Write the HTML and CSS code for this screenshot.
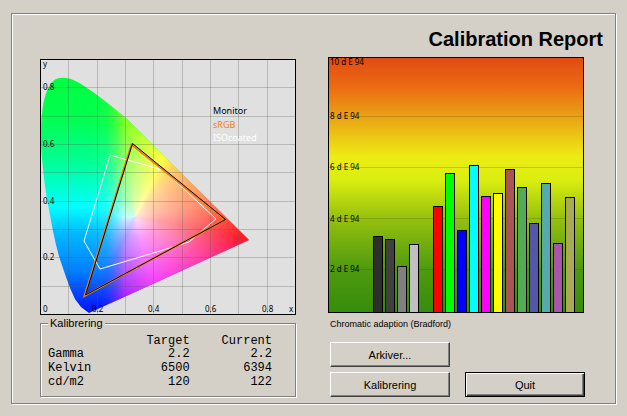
FILE: index.html
```html
<!DOCTYPE html>
<html lang="en">
<head>
<meta charset="utf-8">
<title>Calibration Report</title>
<link rel="stylesheet" href="styles.css">
</head>
<body>
<main class="panel">
  <h1 class="title">Calibration Report</h1>
  <div class="columns">
    <section class="column gamut-column">
      <svg class="chart" viewBox="0 0 256 256" role="img" aria-label="Gamut diagram">
        <defs>
          <clipPath id="locus">
            <path d="M49 254 L45 251 L41 248 L35 240 Q30 230 26 218 L19.500 199 Q16 187 13 172 L6.700 139 Q4 122 2.300 103 Q0.500 86 1.100 70 C1.500 50 5 19 21 19 C29 18 38 23 44 27 Q55 34 65 42 L86 59 L106 79 L209 181 Z"/>
          </clipPath>
        </defs>
        <rect class="plot-area" width="256" height="256"/>
        <foreignObject width="256" height="256" clip-path="url(#locus)">
          <div class="spectrum"><div class="hues"></div></div>
        </foreignObject>
        <path class="grid" d="M28.500 0V256M57.500 0V256M85.500 0V256M113.500 0V256M142.500 0V256M170.500 0V256M198.500 0V256M227.500 0V256M0 28.500H256M0 57.500H256M0 85.500H256M0 113.500H256M0 142.500H256M0 170.500H256M0 198.500H256M0 227.500H256"/>
        <path class="iso" d="M70 96 L123 111 L145 131 L176 160 L159 174 L149 183 L120 192 L60 210 L44 182 L62 123 Z"/>
        <path class="srgb" d="M91.500 85.500 L184.500 160.500 L44.500 237 Z"/>
        <path class="monitor" d="M92.500 84.500 L185.500 160.500 L45.500 236 Z"/>
        <g class="axis">
          <text x="3" y="8">y</text>
          <text x="3" y="31">0.8</text>
          <text x="3" y="88">0.6</text>
          <text x="3" y="145">0.4</text>
          <text x="3" y="201">0.2</text>
          <text x="3" y="253">0</text>
          <text x="52" y="253">0.2</text>
          <text x="108" y="253">0.4</text>
          <text x="165" y="253">0.6</text>
          <text x="222" y="253">0.8</text>
          <text x="249" y="253">x</text>
        </g>
        <g class="key">
          <text class="key-monitor" x="173" y="55">Monitor</text>
          <text class="key-srgb" x="173" y="69">sRGB</text>
          <text class="key-iso" x="173" y="82">ISOcoated</text>
        </g>
        <rect class="frame" x="0.500" y="0.500" width="255" height="255"/>
      </svg>
      <fieldset class="group">
        <legend>Kalibrering</legend>
        <table class="readings">
          <thead><tr><td></td><th scope="col">Target</th><th scope="col">Current</th></tr></thead>
          <tbody>
            <tr><th scope="row">Gamma</th><td>2.2</td><td>2.2</td></tr>
            <tr><th scope="row">Kelvin</th><td>6500</td><td>6394</td></tr>
            <tr><th scope="row">cd/m2</th><td>120</td><td>122</td></tr>
          </tbody>
        </table>
      </fieldset>
    </section>
    <section class="column">
      <svg class="chart" viewBox="0 0 256 256" role="img" aria-label="Colour difference chart">
        <defs>
          <linearGradient id="scale" x1="0" y1="0" x2="0" y2="1">
            <stop offset="0" stop-color="#e04a12"/>
            <stop offset="0.120" stop-color="#ec6c12"/>
            <stop offset="0.230" stop-color="#eaa016"/>
            <stop offset="0.390" stop-color="#ecec14"/>
            <stop offset="0.480" stop-color="#daee10"/>
            <stop offset="0.630" stop-color="#96c00e"/>
            <stop offset="0.830" stop-color="#4e9a0e"/>
            <stop offset="1" stop-color="#368c0c"/>
          </linearGradient>
        </defs>
        <rect width="256" height="256" fill="url(#scale)"/>
        <path class="levels" d="M0 59.500H256M0 110.500H256M0 161.500H256M0 212.500H256"/>
        <g class="axis">
          <text x="2" y="8">10 d E 94</text>
          <text x="2" y="62">8 d E 94</text>
          <text x="2" y="113">6 d E 94</text>
          <text x="2" y="165">4 d E 94</text>
          <text x="2" y="215">2 d E 94</text>
        </g>
        <g class="bars">
          <rect x="45.500" y="179.500" width="9" height="76" fill="#2e2e2e"/>
          <rect x="57.500" y="182.500" width="9" height="73" fill="#404040"/>
          <rect x="69.500" y="209.500" width="9" height="46" fill="#808080"/>
          <rect x="81.500" y="187.500" width="9" height="68" fill="#c0c0c0"/>
          <rect x="105.500" y="149.500" width="9" height="106" fill="#ff0000"/>
          <rect x="117.500" y="116.500" width="9" height="139" fill="#00ff00"/>
          <rect x="129.500" y="173.500" width="9" height="82" fill="#0000ff"/>
          <rect x="141.500" y="108.500" width="9" height="147" fill="#00ffff"/>
          <rect x="153.500" y="139.500" width="9" height="116" fill="#ff00ff"/>
          <rect x="165.500" y="136.500" width="9" height="119" fill="#ffff00"/>
          <rect x="177.500" y="112.500" width="9" height="143" fill="#aa5555"/>
          <rect x="189.500" y="130.500" width="9" height="125" fill="#55aa55"/>
          <rect x="201.500" y="166.500" width="9" height="89" fill="#5555aa"/>
          <rect x="213.500" y="126.500" width="9" height="129" fill="#55aaaa"/>
          <rect x="225.500" y="186.500" width="9" height="69" fill="#aa55aa"/>
          <rect x="237.500" y="140.500" width="9" height="115" fill="#aaaa55"/>
        </g>
        <rect class="frame" x="0.500" y="0.500" width="255" height="255"/>
      </svg>
      <p class="note">Chromatic adaption (Bradford)</p>
      <div class="actions">
        <button class="button" type="button">Arkiver...</button>
        <button class="button second-row" type="button">Kalibrering</button>
        <button class="button second-row default" type="button">Quit</button>
      </div>
    </section>
  </div>
</main>
</body>
</html>
```
FILE: styles.css
```css
* { box-sizing: border-box; }

body {
  margin: 0;
  padding: 13px 11px 12px;
  background: #d4d0c8;
  color: #000;
  font: 11px/14px "Liberation Sans", Arial, sans-serif;
}

.panel,
.group {
  border: 1px solid #808080;
  box-shadow: 1px 1px 0 #fff, inset 1px 1px 0 #fff;
}

.panel { padding-bottom: 6px; }

.title {
  margin: 0;
  padding: 13px 12px 6px;
  font-size: 20px;
  line-height: 24px;
  text-align: right;
}

.columns {
  display: grid;
  grid-template-columns: 1fr 1fr;
  column-gap: 32px;
  padding: 0 31px 0 28px;
}

.column { min-width: 0; }
.gamut-column { padding-top: 2px; }

.chart {
  display: block;
  width: 100%;
  height: auto;
}

.plot-area { fill: #e0e0e0; }

.spectrum {
  width: 256px;
  height: 256px;
  background: linear-gradient(#00ff40 20px, #00ff50 60px, #00ff90 100px, #00ffc8 125px, #00ffff 148px, #00b8ff 175px, #0080ff 212px, #0018ff 250px);
}

.hues {
  height: 100%;
  background:
    radial-gradient(ellipse 105px 95px at 97px 160px, rgba(255, 255, 255, 0.85) 0, rgba(255, 255, 255, 0.6) 20%, rgba(255, 255, 255, 0.35) 55%, rgba(255, 255, 255, 0) 100%),
    conic-gradient(from 0deg at 95px 158px,
      #a0ff20 0deg, #d0ff10 12deg, #ffff00 25deg, #ffc420 36deg, #ff8c28 54deg,
      #ff5a28 80deg, #ff1c28 100deg, #ff1080 118deg, #ff00c0 140deg,
      #f000ff 165deg, #9000ff 190deg, #3010ff 206deg, #3060ff 228deg,
      #30a8ff 250deg, #20ffff 275deg, #20ffb0 300deg, #20ff60 330deg,
      #58ff30 347deg, #a0ff20 360deg);
  mask-image: linear-gradient(to right, transparent 45px, rgba(0, 0, 0, 0.2) 66px, #000 84px);
}

.grid,
.levels {
  fill: none;
  stroke: rgba(90, 90, 80, 0.3);
}

.levels { stroke: rgba(80, 80, 0, 0.25); }

.iso,
.srgb,
.monitor,
.frame {
  fill: none;
  stroke: #000;
}

.iso { stroke: #fff; }
.srgb {
  stroke: #f08010;
  stroke-width: 2;
}
.bars rect { stroke: #000; }

.axis { font: 8px "Noto Sans", sans-serif; }
.key { font: 9px "Noto Sans", sans-serif; }
.key-srgb { fill: #f08010; }
.key-iso { fill: #fff; }

.group {
  margin: 1px 0 0;
  padding: 5px 7px 7px;
}

.group legend {
  padding: 0 2px;
  background: #d4d0c8;
}

.readings {
  width: 100%;
  border-collapse: collapse;
  table-layout: fixed;
  font: 12px/14px "Liberation Mono", "Courier New", monospace;
}

.readings thead { line-height: 12px; }

.readings th,
.readings td {
  padding: 0;
  font-weight: normal;
  text-align: right;
}

.readings th:first-child { text-align: left; }
.readings tr > :first-child { width: 23%; }
.readings tr > :last-child {
  width: 41%;
  padding-right: 16px;
}

.note {
  margin: 4px 2px 11px;
  font-size: 9px;
}

.actions {
  display: grid;
  grid-template-columns: 1fr 1fr;
  gap: 5px 15px;
  margin: 0 -1px 0 2px;
}

.button {
  height: 25px;
  padding: 0;
  border: 1px solid;
  border-color: #fff #404040 #404040 #fff;
  box-shadow: inset -1px -1px 0 #808080;
  background: #d4d0c8;
  color: #000;
  font: inherit;
}

.second-row { grid-row: 2; }

.default {
  border-color: #000;
  box-shadow: inset 1px 1px 0 #fff, inset -1px -1px 0 #404040, inset -2px -2px 0 #808080;
}
```
